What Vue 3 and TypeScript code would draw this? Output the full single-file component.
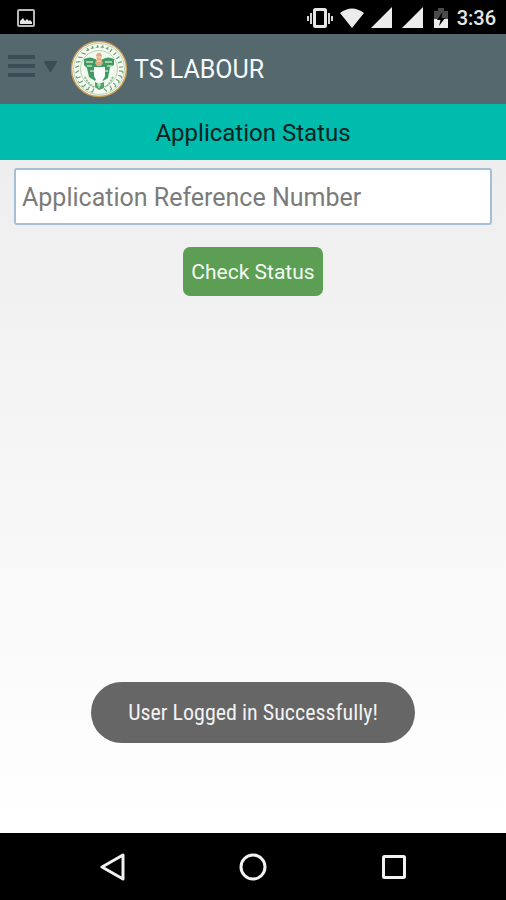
<script setup lang="ts">
import { computed, ref } from 'vue'

interface EmblemMark {
  angle: number
  shape: string
}

const referenceNumber = ref('')
const toastMessage = ref('User Logged in Successfully!')

// Small uneven strokes that suggest the lettering round the seal.
const shapes = ['M-1 5v4M-1 5h2', 'M0 5v4', 'M-1 7h3M1 5v3', 'M-1 5l2 4']
const marks = computed<EmblemMark[]>(() =>
  Array.from({ length: 26 }, (_, i) => ({
    angle: i * 13 - 162,
    shape: shapes[(i * 3 + (i % 5)) % shapes.length],
  })),
)

function checkStatus(): void {
  toastMessage.value = referenceNumber.value
    ? `Checking ${referenceNumber.value}`
    : 'Enter the reference number'
}
</script>

<template>
  <div class="screen">
    <div class="status-bar">
      <svg class="picture" width="18" height="18" viewBox="0 0 18 18" aria-hidden="true">
        <rect x="1" y="1" width="16" height="16" rx="1" fill="none" stroke="#b9b9b9" stroke-width="2" />
        <path d="M3 15v-3l3-3 2 3 2-2 2 2 1-1 2 2v2z" fill="#e4e4e4" />
      </svg>
      <div class="indicators">
        <svg width="26" height="20" viewBox="0 0 26 20" aria-hidden="true">
          <rect x="7.500" y="1.500" width="11" height="17" rx="1" fill="none" stroke="#e6e6e6" stroke-width="3" />
          <path d="M4 5v11M1 8v5M22 5v11M25 8v5" fill="none" stroke="#d5d5d5" stroke-width="2" />
        </svg>
        <svg width="26" height="20" viewBox="0 0 26 20" aria-hidden="true">
          <path d="M1 5Q13-4 25 5L13 20z" fill="#ececec" />
        </svg>
        <svg width="22" height="21" viewBox="0 0 22 21" aria-hidden="true">
          <path d="M0 21L21 0v21z" fill="#ececec" />
        </svg>
        <svg class="second-signal" width="22" height="21" viewBox="0 0 22 21" aria-hidden="true">
          <path d="M0 21L21 0v21z" fill="#ececec" />
        </svg>
        <svg class="battery" width="14" height="20" viewBox="0 0 14 20" aria-hidden="true">
          <path d="M0 3h4V0h6v3h4v9H0z" fill="#4b4b4b" />
          <path d="M0 11h14v9H0z" fill="#ececec" />
          <path d="M8.500 4L3 12h3.500L5 18l6-8H7.500z" fill="#000" />
        </svg>
        <time class="clock">3:36</time>
      </div>
    </div>

    <header class="app-bar">
      <button class="menu" type="button" aria-label="Menu">
        <svg width="50" height="22" viewBox="0 0 50 22" aria-hidden="true">
          <path d="M1 2h27M1 11h27M1 20h27" stroke="#3b4e55" stroke-width="4" />
          <path d="M38 7h11l-5.500 9z" fill="#3b4e55" stroke="#3b4e55" stroke-width="2" stroke-linejoin="round" />
        </svg>
      </button>
      <svg class="emblem" width="58" height="58" viewBox="0 0 58 58" aria-hidden="true">
        <circle cx="29" cy="29" r="27.500" fill="#f8faf0" stroke="#c79d57" stroke-width="1.500" />
        <circle cx="29" cy="29" r="25.500" fill="none" stroke="#b5d3bb" stroke-width="1" />
        <path
          v-for="mark in marks"
          :key="mark.angle"
          :d="mark.shape"
          :transform="`rotate(${mark.angle} 29 29) translate(29 0)`"
          fill="none"
          stroke="#6aa57c"
          stroke-width="1.200"
        />
        <circle cx="29" cy="29" r="18.500" fill="#f3f8ee" stroke="#b3d3b9" stroke-width="1" />
        <path d="M14 19q6-3 11 0l4 2 4-2q5-3 11 0v6l-4 2-2 11-5 3-3-7h-2l-3 7-6-4-2-9-3-3z" fill="#3f9a64" />
        <path d="M16 22h7M35 22h7M17 26h5M37 26h5M20 31h4M35 31h3" stroke="#c3e0c7" stroke-width="1.500" />
        <path d="M24 27h11v9q-1 4-5 5-5-1-6-5z" fill="#fff" />
        <path d="M25 42l4 2 5-2v6l-5 2-4-3z" fill="#4da26a" />
        <path d="M27 45h4M29 43v5" stroke="#d8edda" stroke-width="1" />
        <path d="M26 15q3-5 6 0l-1 4 2 4-2 3h-4l-2-3 2-4z" fill="#e0aa83" />
        <path d="M27 17h4M27 21h4" stroke="#f6dfc6" stroke-width="1" />
        <path d="M15 37q3 7 9 10M43 37q-3 7-8 10" fill="none" stroke="#8fc49c" stroke-width="2" stroke-dasharray="2 1" />
      </svg>
      <span class="title">TS LABOUR</span>
    </header>

    <h1 class="heading">Application Status</h1>

    <main class="content">
      <form class="form" @submit.prevent="checkStatus">
        <input
          v-model="referenceNumber"
          class="field"
          type="text"
          placeholder="Application Reference Number"
          aria-label="Application Reference Number"
        />
        <button class="check" type="submit">Check Status</button>
      </form>
      <div class="toast" role="status">{{ toastMessage }}</div>
    </main>

    <nav class="nav-bar" aria-label="System">
      <button type="button" aria-label="Back">
        <svg width="28" height="28" viewBox="0 0 28 28" aria-hidden="true">
          <path d="M25 2v24L4 14z" fill="none" stroke="#f2f2f2" stroke-width="3" stroke-linejoin="round" />
        </svg>
      </button>
      <button type="button" aria-label="Home">
        <svg width="28" height="28" viewBox="0 0 28 28" aria-hidden="true">
          <circle cx="14" cy="14" r="12" fill="none" stroke="#f2f2f2" stroke-width="3" />
        </svg>
      </button>
      <button type="button" aria-label="Recent apps">
        <svg width="28" height="28" viewBox="0 0 28 28" aria-hidden="true">
          <rect x="3.500" y="3.500" width="21" height="21" rx="1" fill="none" stroke="#f2f2f2" stroke-width="3" />
        </svg>
      </button>
    </nav>
  </div>
</template>

<style>
body {
  margin: 0;
}
</style>

<style scoped>
.screen {
  display: flex;
  flex-direction: column;
  min-height: 100vh;
  font-family: Roboto, "Liberation Sans", sans-serif;
}

svg {
  display: block;
  flex: none;
}

button {
  margin: 0;
  border: 0;
  font: inherit;
  cursor: pointer;
}

.status-bar {
  display: flex;
  align-items: center;
  justify-content: space-between;
  height: 34px;
  padding: 1px 10px 0 17px;
  box-sizing: border-box;
  background: #000;
}

.indicators {
  display: flex;
  align-items: center;
  gap: 6px;
}

.second-signal {
  margin-left: 3px;
}

.battery {
  margin-left: 4px;
}

.clock {
  padding-left: 3px;
  color: #e6e6e6;
  font-size: 20px;
  font-weight: 500;
  line-height: 24px;
}

.app-bar {
  display: flex;
  align-items: center;
  height: 70px;
  padding: 0 7px;
  background: #54686d;
}

.menu {
  padding: 0 13px 6px 0;
  background: none;
}

.title {
  padding: 2px 0 0 6px;
  color: #f5f8fc;
  font-size: 25px;
  line-height: 32px;
}

.heading {
  margin: 0;
  padding: 15px 16px 13px;
  background: #00bcad;
  color: #06221f;
  font-size: 24px;
  font-weight: 400;
  line-height: 28px;
  text-align: center;
}

.content {
  display: flex;
  flex: 1;
  flex-direction: column;
  align-items: center;
  justify-content: space-between;
  padding: 8px 14px 90px;
  background: linear-gradient(#eeeeee, #ffffff);
}

.form {
  display: flex;
  flex-direction: column;
  align-items: center;
  gap: 22px;
  width: 100%;
}

.field {
  box-sizing: border-box;
  width: 100%;
  height: 57px;
  padding: 2px 6px 0;
  border: 2px solid #a5bfd6;
  border-radius: 3px;
  background: #fff;
  color: #222;
  font: inherit;
  font-size: 25px;
}

.field::placeholder {
  color: #7b7b7b;
  opacity: 1;
}

.check {
  padding: 11px 8px 10px;
  border-radius: 7px;
  background: #5c9f54;
  color: #f4faf3;
  font-size: 21px;
  line-height: 28px;
}

.toast {
  padding: 17px 37px 16px;
  border-radius: 31px;
  background: #666;
  color: #f2f2f2;
  font-family: "Roboto Condensed", Roboto, sans-serif;
  font-size: 22px;
  line-height: 28px;
}

.nav-bar {
  display: grid;
  grid-template-columns: repeat(3, 1fr);
  height: 67px;
  padding: 0 42px;
  background: #000;
}

.nav-bar button {
  display: flex;
  align-items: center;
  justify-content: center;
  padding: 0;
  background: none;
}
</style>
